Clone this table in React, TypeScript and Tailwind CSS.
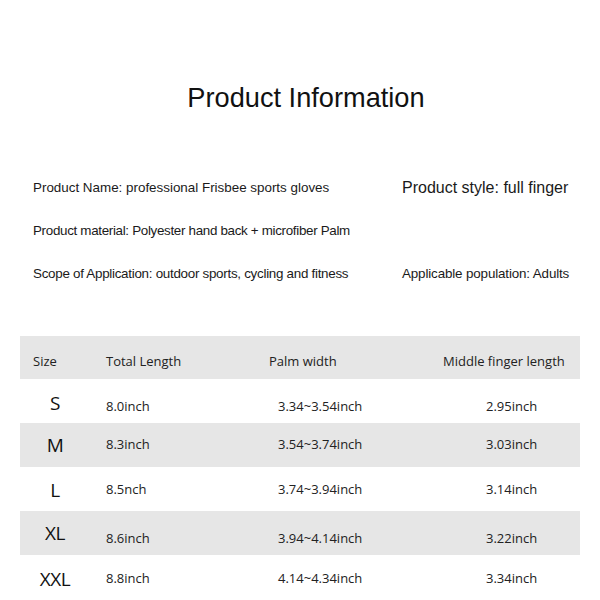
const INFO_FONT = { fontFamily: '"Liberation Sans", Arial, sans-serif' };
const TABLE_FONT = { fontFamily: '"Open Sans", "Noto Sans", sans-serif' };

const ROWS = [
  { size: "S", total: "8.0inch", palm: "3.34~3.54inch", finger: "2.95inch", shaded: false, shift: "translate-y-[6px]", lift: "translate-y-[2px]" },
  { size: "M", total: "8.3inch", palm: "3.54~3.74inch", finger: "3.03inch", shaded: true, shift: "translate-y-[0px]", lift: "translate-y-[0px]" },
  { size: "L", total: "8.5nch", palm: "3.74~3.94inch", finger: "3.14inch", shaded: false, shift: "translate-y-[1px]", lift: "translate-y-[1px]" },
  { size: "XL", total: "8.6inch", palm: "3.94~4.14inch", finger: "3.22inch", shaded: true, shift: "translate-y-[6px]", lift: "translate-y-[0px]" },
  { size: "XXL", total: "8.8inch", palm: "4.14~4.34inch", finger: "3.34inch", shaded: false, shift: "translate-y-[2px]", lift: "translate-y-[2px]" },
];

export default function App() {
  return (
    <div className="w-[600px] h-[600px] bg-white overflow-hidden text-[#1a1a1a]">
      <div style={INFO_FONT}>
        <h1 className="pt-[80px] h-[160px] text-center text-[27.2px] leading-[36px] text-[#111] pl-[12px]">
          Product Information
        </h1>

        <div className="grid grid-cols-[369px_1fr] pl-[33px] text-[13.4px] leading-[20px]">
          <div className="h-[40px] pt-[18px]">Product Name: professional Frisbee sports gloves</div>
          <div className="h-[40px] pt-[18px] text-[16px]">Product style: full finger</div>
          <div className="h-[43px] pt-[21px] tracking-[-0.32px]">Product material: Polyester hand back + microfiber Palm</div>
          <div className="h-[43px]"></div>
          <div className="h-[42px] pt-[21px] tracking-[-0.28px]">Scope of Application: outdoor sports, cycling and fitness</div>
          <div className="h-[42px] pt-[21px] tracking-[-0.14px]">Applicable population: Adults</div>
        </div>
      </div>

      <div className="mx-[20px] mt-[51px]" style={TABLE_FONT}>
        <div className="grid grid-cols-[86px_163px_174px_1fr] h-[43px] items-center bg-[#e6e6e6] text-[13px] text-[#222] pt-[8px]">
          <div className="pl-[13px]">Size</div>
          <div>Total Length</div>
          <div>Palm width</div>
          <div>Middle finger length</div>
        </div>
        {ROWS.map((r) => (
          <div
            key={r.size}
            className={`grid grid-cols-[86px_163px_174px_1fr] h-[44px] items-center text-[13px] text-[#222] ${
              r.shaded ? "bg-[#e6e6e6]" : "bg-white"
            }`}
          >
            <div className={`w-[70px] text-center text-[19px] tracking-[-0.5px] text-[#111] ${r.lift}`}>{r.size}</div>
            <div className={r.shift}>{r.total}</div>
            <div className={`pl-[9px] ${r.shift}`}>{r.palm}</div>
            <div className={`pl-[43px] ${r.shift}`}>{r.finger}</div>
          </div>
        ))}
      </div>
    </div>
  );
}
